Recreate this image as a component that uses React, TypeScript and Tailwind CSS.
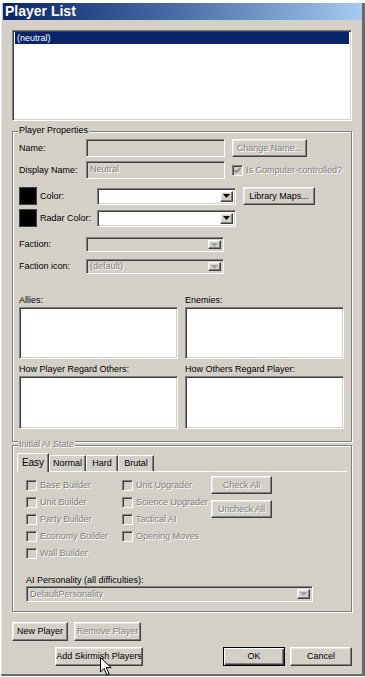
import React from 'react';

const raised =
  'bg-[#d4d0c8] border border-t-white border-l-white border-r-[#404040] border-b-[#404040] shadow-[inset_-1px_-1px_0_#808080,inset_1px_1px_0_#e9e7e2]';
const sunken =
  'border border-t-[#808080] border-l-[#808080] border-r-white border-b-white shadow-[inset_1px_1px_0_#404040,inset_-1px_-1px_0_#d4d0c8]';
const etched = 'border border-[#808080] shadow-[inset_1px_1px_0_#fff,1px_1px_0_#fff]';
const dim = 'text-[#808080] [text-shadow:1px_1px_0_#fff]';

function Button({
  label,
  className,
  disabled,
  isDefault,
}: {
  label: string;
  className: string;
  disabled?: boolean;
  isDefault?: boolean;
}) {
  const frame = isDefault
    ? 'bg-[#d4d0c8] border border-black shadow-[inset_1px_1px_0_#fff,inset_-1px_-1px_0_#404040,inset_-2px_-2px_0_#808080]'
    : raised;
  return (
    <div className={`flex shrink-0 items-center justify-center ${frame} ${disabled ? dim : 'text-black'} ${className}`}>
      {label}
    </div>
  );
}

function Arrow({ disabled }: { disabled?: boolean }) {
  return (
    <div className={`flex h-full w-[13px] items-center justify-center ${raised}`}>
      <svg width="7" height="4" viewBox="0 0 7 4">
        <path d="M0 0h7L3.5 4z" fill={disabled ? '#a0a0a0' : '#000'} />
      </svg>
    </div>
  );
}

function Combo({ value, className, disabled }: { value?: string; className: string; disabled?: boolean }) {
  return (
    <div className={`flex shrink-0 items-stretch p-[2px] ${sunken} ${disabled ? 'bg-[#d4d0c8]' : 'bg-white'} ${className}`}>
      <div className={`flex flex-1 items-center pl-[1px] ${dim}`}>{value}</div>
      <Arrow disabled={disabled} />
    </div>
  );
}

function Field({ value, className }: { value?: string; className: string }) {
  return (
    <div className={`flex shrink-0 items-center bg-[#d4d0c8] pl-[3px] ${sunken} ${dim} ${className}`}>{value}</div>
  );
}

function Check({ label, checked }: { label: string; checked?: boolean }) {
  return (
    <div className="flex items-center">
      <div className={`flex h-[11px] w-[11px] shrink-0 items-center justify-center bg-[#d4d0c8] ${sunken}`}>
        {checked && (
          <svg width="7" height="7" viewBox="0 0 7 7">
            <path d="M0.5 3l2 2 4-4" stroke="#808080" strokeWidth="1.6" fill="none" />
          </svg>
        )}
      </div>
      <span className={`ml-[3px] whitespace-nowrap ${dim}`}>{label}</span>
    </div>
  );
}

function Group({ label, className, disabled, children }: { label: string; className: string; disabled?: boolean; children: React.ReactNode }) {
  return (
    <div className={`relative ${etched} ${className}`}>
      <span className={`absolute -top-[7px] left-[5px] bg-[#d4d0c8] px-[1px] leading-[11px] ${disabled ? dim : 'text-black'}`}>
        {label}
      </span>
      {children}
    </div>
  );
}

const col1 = [
  ['Base Builder', 'h-[17px]'],
  ['Unit Builder', 'h-[17px]'],
  ['Party Builder', 'h-[16px]'],
  ['Economy Builder', 'h-[18px]'],
  ['Wall Builder', 'h-[17px]'],
];
const col2 = [
  ['Unit Upgrader', 'h-[17px]'],
  ['Science Upgrader', 'h-[17px]'],
  ['Tactical AI', 'h-[16px]'],
  ['Opening Moves', 'h-[18px]'],
];

export default function App() {
  return (
    <div className="relative h-[677px] w-[365px] overflow-hidden bg-white pl-[1px] pt-[3px] font-['Liberation_Sans',Arial,sans-serif] text-[9px] leading-[11px] text-black">
      <div className="h-[673px] w-[364px] border-b-2 border-r-[3px] border-b-[#6a6a6a] border-r-[#6a6a6a] bg-[#d4d0c8] pl-[2px] shadow-[inset_1px_0_0_#e9e7e2]">
        <div className="h-[17px] bg-gradient-to-r from-[#0a246a] via-[#4d6fa8] to-[#a6caf0] pl-[2px] text-[14px] font-bold leading-[17px] text-white">
          Player List
        </div>

        <div className="ml-[9px] w-[340px]">
          {/* player list */}
          <div className={`mt-[10px] h-[91px] bg-white p-[1px] ${sunken}`}>
            <div className="mx-[1px] h-[12px] bg-[#0a246a] pl-[2px] leading-[12px] text-white">(neutral)</div>
          </div>

          <Group label="Player Properties" className="mt-[10px] h-[311px] pl-[6px] pt-[7px]">
            <div className="flex h-[18px] items-center">
              <span className="w-[67px]">Name:</span>
              <Field className="h-[18px] w-[139px]" />
              <Button label="Change Name..." disabled className="ml-[7px] h-[18px] w-[75px]" />
            </div>
            <div className="mt-[4px] flex h-[18px] items-center">
              <span className="w-[67px]">Display Name:</span>
              <Field value="Neutral" className="h-[18px] w-[139px] items-start pt-[2px]" />
              <div className="ml-[7px]">
                <Check label="Is Computer-controlled?" checked />
              </div>
            </div>
            <div className="mt-[8px] flex h-[18px] items-center">
              <div className="h-[18px] w-[18px] shrink-0 border border-[#404040] bg-black" />
              <span className="ml-[3px] w-[57px]">Color:</span>
              <Combo className="h-[17px] w-[139px]" />
              <Button label="Library Maps..." className="ml-[7px] h-[18px] w-[72px]" />
            </div>
            <div className="mt-[4px] flex h-[18px] items-center">
              <div className="h-[18px] w-[18px] shrink-0 border border-[#404040] bg-black" />
              <span className="ml-[3px] w-[57px]">Radar Color:</span>
              <Combo className="h-[17px] w-[139px]" />
            </div>
            <div className="mt-[10px] flex h-[15px] items-center">
              <span className="w-[67px]">Faction:</span>
              <Combo disabled className="h-[15px] w-[138px]" />
            </div>
            <div className="mt-[7px] flex h-[15px] items-center">
              <span className="w-[67px]">Faction icon:</span>
              <Combo disabled value="(default)" className="h-[15px] w-[138px]" />
            </div>

            <div className="mt-[21px] flex gap-[7px]">
              <span className="w-[159px]">Allies:</span>
              <span className="w-[159px]">Enemies:</span>
            </div>
            <div className="mt-[1px] flex gap-[7px]">
              <div className={`h-[52px] w-[159px] bg-white ${sunken}`} />
              <div className={`h-[52px] w-[159px] bg-white ${sunken}`} />
            </div>
            <div className="mt-[5px] flex gap-[7px]">
              <span className="w-[159px]">How Player Regard Others:</span>
              <span className="w-[159px]">How Others Regard Player:</span>
            </div>
            <div className="mt-[1px] flex gap-[7px]">
              <div className={`h-[53px] w-[159px] bg-white ${sunken}`} />
              <div className={`h-[53px] w-[159px] bg-white ${sunken}`} />
            </div>
          </Group>

          <Group label="Initial AI State" disabled className="mt-[3px] h-[167px] pt-[7px]">
            <div className="flex h-[18px] items-end pl-[4px]">
              <div className="relative z-10 -mb-[1px] flex h-[19px] w-[32px] items-start justify-center border border-b-0 border-l-white border-r-[#404040] border-t-white bg-[#d4d0c8] pt-[3px] text-[10px] shadow-[inset_-1px_0_0_#808080]">
                Easy
              </div>
              <div className="flex h-[16px] w-[37px] items-center justify-center border border-b-0 border-l-white border-r-[#404040] border-t-white shadow-[inset_-1px_0_0_#808080]">
                Normal
              </div>
              <div className="flex h-[16px] w-[32px] items-center justify-center border border-b-0 border-l-white border-r-[#404040] border-t-white shadow-[inset_-1px_0_0_#808080]">
                Hard
              </div>
              <div className="flex h-[16px] w-[36px] items-center justify-center border border-b-0 border-l-white border-r-[#404040] border-t-white shadow-[inset_-1px_0_0_#808080]">
                Brutal
              </div>
            </div>
            <div className="mx-[4px] border-t border-t-white pl-[9px] pt-[5px]">
              <div className="flex">
                <div className="w-[96px]">
                  {col1.map(([t, h]) => (
                    <div key={t} className={`flex items-center ${h}`}>
                      <Check label={t} />
                    </div>
                  ))}
                </div>
                <div className="w-[89px]">
                  {col2.map(([t, h]) => (
                    <div key={t} className={`flex items-center ${h}`}>
                      <Check label={t} />
                    </div>
                  ))}
                </div>
                <div className="-mt-[1px] flex flex-col">
                  <Button label="Check All" disabled className="h-[18px] w-[61px]" />
                  <Button label="Uncheck All" disabled className="mt-[6px] h-[18px] w-[61px]" />
                </div>
              </div>
              <div className="mt-[13px]">AI Personality (all difficulties):</div>
              <Combo disabled value="DefaultPersonality" className="h-[16px] w-[287px]" />
            </div>
          </Group>

          <div className="mt-[10px] flex">
            <Button label="New Player" className="h-[19px] w-[56px]" />
            <Button label="Remove Player" disabled className="ml-[6px] h-[19px] w-[67px]" />
          </div>
          <div className="mt-[6px] flex">
            <Button label="Add Skirmish Players" className="ml-[43px] h-[19px] w-[88px]" />
            <Button label="OK" isDefault className="ml-[80px] h-[19px] w-[62px]" />
            <Button label="Cancel" className="ml-[5px] h-[19px] w-[62px]" />
          </div>
        </div>
      </div>

      {/* mouse pointer */}
      <svg className="absolute left-[100px] top-[657px]" width="12" height="19" viewBox="0 0 12 19">
        <path d="M0.5 0.5v14.5l3.5-3.5 3 6.5 2.2-1-3-6.3h5z" fill="#fff" stroke="#000" strokeWidth="1" strokeLinejoin="round" />
      </svg>
    </div>
  );
}
